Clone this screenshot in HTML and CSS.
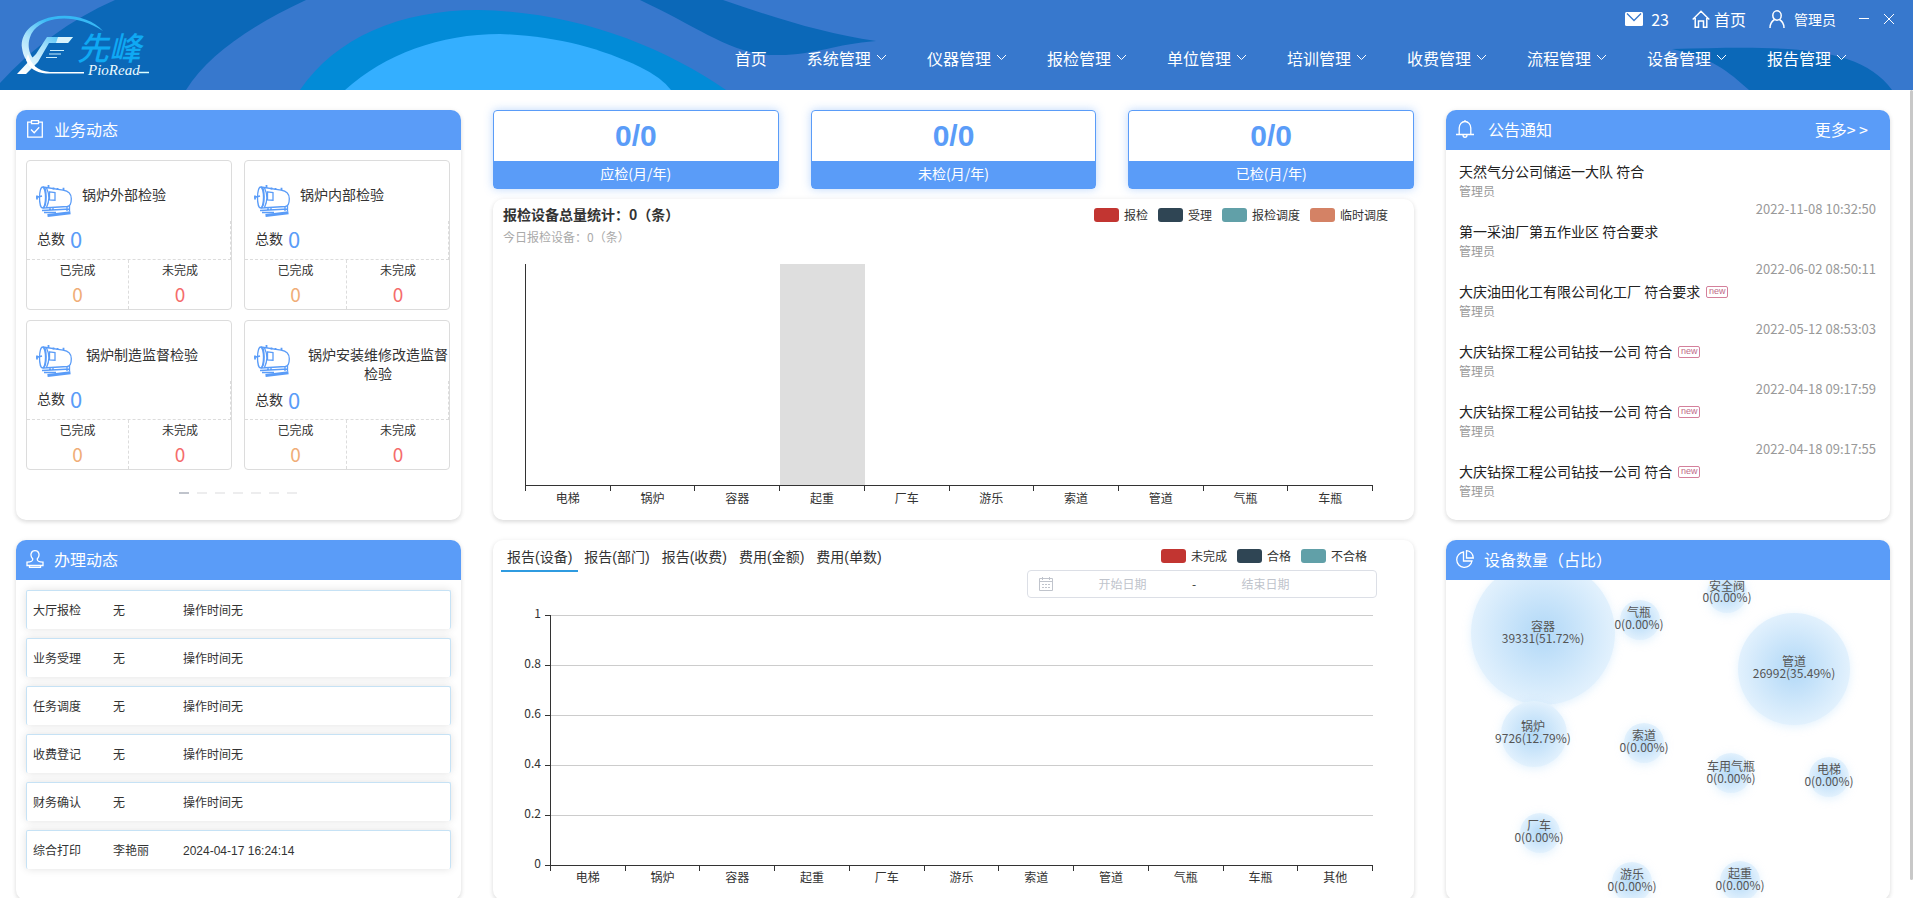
FILE: index.html
```html
<!DOCTYPE html>
<html lang="zh-CN">
<head>
<meta charset="utf-8">
<title>先峰</title>
<link rel="stylesheet" href="styles.css">
</head>
<body>
<svg class="defs" aria-hidden="true">
  <symbol id="boiler" viewBox="0 0 36 32">
    <g fill="none" stroke="#5a9cf8" stroke-width="1.3">
      <ellipse cx="6.500" cy="12.500" rx="3" ry="10.500"/>
      <path d="M7 2c4 0 4.500 19 0 21M7 2l20 3.200c5 .8 8.300 4 8.300 8.500 0 4-1.500 7.500-4 7.800L7 23M10.500 3c3 6 3 13 0 19.500"/>
      <path d="M13.500 6.800l5.500.8v7.600l-5.500-.3z"/>
      <path d="M0 12.500l6-1.500M1 10.500v4M12.500 0v3M17.500 2.500v2M21.500 3v2M27.500 2.800V5" stroke-width="1.800"/>
      <path d="M14 22.500v3.500M17 22v4M33.500 21v5.500M31 21v5M6 25.500l28-1.500M8 27.500h12"/>
      <path d="M11.500 30.500l23-2.800" stroke-width="3"/>
    </g>
  </symbol>
  <symbol id="down" viewBox="0 0 11 8"><path d="M1 1l4.500 4.500L10 1" fill="none" stroke="currentColor" stroke-width="1"/></symbol>
</svg>

<header class="header">
  <svg class="header-bg" viewBox="0 0 1913 90" preserveAspectRatio="none" aria-hidden="true">
    <path fill="#0b68b8" d="M115 0H306C250 26 208 55 186 90H0V83C32 48 70 20 115 0z"/>
    <path fill="#0b68b8" d="M640 0H723C775 18 825 34 876 41C835 44 815 55 779 55C735 57 700 28 640 0z"/>
    <path fill="#028bd7" d="M300 90C335 38 400 10 478 10C575 12 660 45 726 90z"/>
    <path fill="#34afff" d="M345 90C385 54 440 34 500 34C555 36 600 48 640 67Q661 77 671 90z"/>
    <path fill="#0b68b8" d="M1672 49C1780 46 1860 44 1892 90H1749C1728 71 1712 58 1672 49z"/>
  </svg>
  <svg class="logo" width="160" height="90" viewBox="0 0 160 90" role="img" aria-label="先峰 PioRead">
    <defs>
      <linearGradient id="lg" x1="0" y1="75" x2="40" y2="15" gradientUnits="userSpaceOnUse">
        <stop offset=".2" stop-color="#fff"/><stop offset=".65" stop-color="#a9e2fb"/><stop offset="1" stop-color="#36b8f5"/>
      </linearGradient>
    </defs>
    <path fill="url(#lg)" d="M103 31C92 18 70 13 52 17C32 21 20 34 22 48C23 56 26 61 31 64L34 59C28 53 26 40 34 30C46 16 76 13 103 31z"/>
    <path fill="url(#lg)" d="M17 74H26L38 62L49 43H68L73 37H47L36 54L30 60z"/>
    <path fill="#fff" d="M28 54C31 64 37 71 50 72H84V73.500H46C36 73 29 68 26 60z"/>
    <path stroke="#c9eefc" stroke-width="1.200" d="M50 50.500H64M49 54H61M46 57.500H57"/>
    <path fill="#d9f3fc" d="M58 37H73L68 43H56z"/>
    <text class="logo-name" x="77" y="60">先峰</text>
    <text class="logo-sub" x="88" y="75">PioRead</text>
    <path stroke="#dff" stroke-width="1.500" d="M139 72.500H149"/>
  </svg>
  <div class="header-main">
    <div class="toolbar">
      <a class="tool" href="#">
        <svg width="18" height="14" viewBox="0 0 18 14"><rect width="18" height="14" rx="1.500" fill="#fff"/><path d="M2 1.500l7 7 7-7" fill="none" stroke="#3778cd" stroke-width="1.300"/></svg>
        <span class="tool-count">23</span>
      </a>
      <a class="tool tool-home" href="#">
        <svg width="18" height="18" viewBox="0 0 18 18" fill="none" stroke="#fff" stroke-width="1.500"><path d="M.7 9.500L9 1.300l8.300 8.200M3.200 8v9.200h3.300V11h5v6.200h3.300V8"/></svg>
        <span>首页</span>
      </a>
      <a class="tool tool-user" href="#">
        <svg width="16" height="18" viewBox="0 0 16 18" fill="none" stroke="#fff" stroke-width="1.500"><ellipse cx="8" cy="5.500" rx="4.200" ry="4.700"/><path d="M1 18c0-4.500 2-7 4.500-8.500M15 18c0-4.500-2-7-4.500-8.500"/></svg>
        <span>管理员</span>
      </a>
      <div class="window-controls">
        <button class="win-btn" type="button" aria-label="最小化"><svg width="10" height="10" viewBox="0 0 10 10"><path d="M0 4.500h10" stroke="#fff"/></svg></button>
        <button class="win-btn" type="button" aria-label="关闭"><svg width="10" height="10" viewBox="0 0 10 10"><path d="M0 0l10 10M10 0L0 10" stroke="#fff"/></svg></button>
      </div>
    </div>
    <nav class="nav">
      <a href="#">首页</a>
      <a href="#">系统管理<svg class="arrow"><use href="#down"/></svg></a>
      <a href="#">仪器管理<svg class="arrow"><use href="#down"/></svg></a>
      <a href="#">报检管理<svg class="arrow"><use href="#down"/></svg></a>
      <a href="#">单位管理<svg class="arrow"><use href="#down"/></svg></a>
      <a href="#">培训管理<svg class="arrow"><use href="#down"/></svg></a>
      <a href="#">收费管理<svg class="arrow"><use href="#down"/></svg></a>
      <a href="#">流程管理<svg class="arrow"><use href="#down"/></svg></a>
      <a href="#">设备管理<svg class="arrow"><use href="#down"/></svg></a>
      <a href="#">报告管理<svg class="arrow"><use href="#down"/></svg></a>
    </nav>
  </div>
</header>

<main class="board">
  <section class="card area-business">
    <div class="card-head">
      <svg class="head-icon" width="18" height="18" viewBox="0 0 18 18" fill="none" stroke="#fff" stroke-width="1.300"><path d="M5 2.200H1.700v15h14.600v-15H13M5.500.7h7v3h-7zM5 9.500l3.200 3.200 5-5.500"/></svg>
      <h2>业务动态</h2>
    </div>
    <div class="kinds">
      <article class="kind">
        <div class="kind-top"><svg class="boiler"><use href="#boiler"/></svg><h3>锅炉外部检验</h3></div>
        <div class="kind-total">总数<b>0</b></div>
        <div class="kind-split"><div>已完成<b class="done">0</b></div><div>未完成<b class="todo">0</b></div></div>
      </article>
      <article class="kind">
        <div class="kind-top"><svg class="boiler"><use href="#boiler"/></svg><h3>锅炉内部检验</h3></div>
        <div class="kind-total">总数<b>0</b></div>
        <div class="kind-split"><div>已完成<b class="done">0</b></div><div>未完成<b class="todo">0</b></div></div>
      </article>
      <article class="kind">
        <div class="kind-top kind-top-mid"><svg class="boiler"><use href="#boiler"/></svg><h3>锅炉制造监督检验</h3></div>
        <div class="kind-total">总数<b>0</b></div>
        <div class="kind-split"><div>已完成<b class="done">0</b></div><div>未完成<b class="todo">0</b></div></div>
      </article>
      <article class="kind">
        <div class="kind-top kind-top-long"><svg class="boiler"><use href="#boiler"/></svg><h3>锅炉安装维修改造监督检验</h3></div>
        <div class="kind-total">总数<b>0</b></div>
        <div class="kind-split"><div>已完成<b class="done">0</b></div><div>未完成<b class="todo">0</b></div></div>
      </article>
    </div>
    <div class="dots">
      <button type="button" class="dot active" aria-label="1"></button><button type="button" class="dot" aria-label="2"></button><button type="button" class="dot" aria-label="3"></button><button type="button" class="dot" aria-label="4"></button><button type="button" class="dot" aria-label="5"></button><button type="button" class="dot" aria-label="6"></button><button type="button" class="dot" aria-label="7"></button>
    </div>
  </section>

  <div class="area-stats">
    <div class="stats">
      <div class="stat"><strong>0/0</strong><span>应检(月/年)</span></div>
      <div class="stat"><strong>0/0</strong><span>未检(月/年)</span></div>
      <div class="stat"><strong>0/0</strong><span>已检(月/年)</span></div>
    </div>
    <section class="card chart-card">
      <div class="chart-head">
        <div>
          <h3 class="chart-title">报检设备总量统计：0（条）</h3>
          <p class="chart-sub">今日报检设备：0（条）</p>
        </div>
        <ul class="legend">
          <li><i class="swatch red"></i>报检</li>
          <li><i class="swatch navy"></i>受理</li>
          <li><i class="swatch teal"></i>报检调度</li>
          <li><i class="swatch orange"></i>临时调度</li>
        </ul>
      </div>
      <div class="plot plot-volume">
        <div class="cat"><span>电梯</span></div><div class="cat"><span>锅炉</span></div><div class="cat"><span>容器</span></div><div class="cat hover"><span>起重</span></div><div class="cat"><span>厂车</span></div><div class="cat"><span>游乐</span></div><div class="cat"><span>索道</span></div><div class="cat"><span>管道</span></div><div class="cat"><span>气瓶</span></div><div class="cat"><span>车瓶</span></div>
      </div>
    </section>
  </div>

  <section class="card area-notice">
    <div class="card-head">
      <svg class="head-icon" width="18" height="18" viewBox="0 0 18 18" fill="none" stroke="#fff" stroke-width="1.300"><path d="M0 14.500h18M3.200 14.500V8a5.800 6.500 0 0 1 11.600 0v6.500M9 0v1.500M7 15c0 3 4 3 4 0"/></svg>
      <h2 class="notice-heading">公告通知</h2>
      <a class="more" href="#">更多&gt; &gt;</a>
    </div>
    <ul class="notices">
      <li><h3>天然气分公司储运一大队 符合</h3><p>管理员</p><time>2022-11-08 10:32:50</time></li>
      <li><h3>第一采油厂第五作业区 符合要求</h3><p>管理员</p><time>2022-06-02 08:50:11</time></li>
      <li><h3>大庆油田化工有限公司化工厂 符合要求<em>new</em></h3><p>管理员</p><time>2022-05-12 08:53:03</time></li>
      <li><h3>大庆钻探工程公司钻技一公司 符合<em>new</em></h3><p>管理员</p><time>2022-04-18 09:17:59</time></li>
      <li><h3>大庆钻探工程公司钻技一公司 符合<em>new</em></h3><p>管理员</p><time>2022-04-18 09:17:55</time></li>
      <li><h3>大庆钻探工程公司钻技一公司 符合<em>new</em></h3><p>管理员</p></li>
    </ul>
  </section>

  <section class="card area-process">
    <div class="card-head">
      <svg class="head-icon" width="18" height="18" viewBox="0 0 18 18" fill="none" stroke="#fff" stroke-width="1.300"><path d="M6.800 9C3.500 5.500 5 .7 9 .7S14.500 5.500 11.200 9c0 2 .8 3 5.800 3.200v3.300H1v-3.300C6 12 6.800 11 6.800 9zM3.500 15.500v2h11v-2"/></svg>
      <h2>办理动态</h2>
    </div>
    <ul class="steps">
      <li><span>大厅报检</span><span>无</span><span>操作时间无</span></li>
      <li><span>业务受理</span><span>无</span><span>操作时间无</span></li>
      <li><span>任务调度</span><span>无</span><span>操作时间无</span></li>
      <li><span>收费登记</span><span>无</span><span>操作时间无</span></li>
      <li><span>财务确认</span><span>无</span><span>操作时间无</span></li>
      <li><span>综合打印</span><span>李艳丽</span><span>2024-04-17 16:24:14</span></li>
    </ul>
  </section>

  <section class="card area-report">
    <div class="report-head">
      <div class="tabs">
        <button type="button" class="tab active">报告(设备)</button><button type="button" class="tab">报告(部门)</button><button type="button" class="tab">报告(收费)</button><button type="button" class="tab">费用(金额)</button><button type="button" class="tab">费用(单数)</button>
      </div>
      <ul class="legend">
        <li><i class="swatch red"></i>未完成</li>
        <li><i class="swatch navy"></i>合格</li>
        <li><i class="swatch teal"></i>不合格</li>
      </ul>
    </div>
    <div class="range">
      <svg width="14" height="14" viewBox="0 0 14 14" fill="none" stroke="#c0c4cc"><path d="M.5 1.500h13v12H.5zM.5 4.500h13M3.500 0v3M10.500 0v3"/><path d="M3 7.500h8M3 10.500h8" stroke-dasharray="2 1"/></svg>
      <input type="text" placeholder="开始日期" aria-label="开始日期">
      <span>-</span>
      <input type="text" placeholder="结束日期" aria-label="结束日期">
    </div>
    <div class="report-chart">
      <ol class="y-axis"><li>1</li><li>0.8</li><li>0.6</li><li>0.4</li><li>0.2</li><li>0</li></ol>
      <div class="plot plot-report">
        <div class="cat"><span>电梯</span></div><div class="cat"><span>锅炉</span></div><div class="cat"><span>容器</span></div><div class="cat"><span>起重</span></div><div class="cat"><span>厂车</span></div><div class="cat"><span>游乐</span></div><div class="cat"><span>索道</span></div><div class="cat"><span>管道</span></div><div class="cat"><span>气瓶</span></div><div class="cat"><span>车瓶</span></div><div class="cat"><span>其他</span></div>
      </div>
    </div>
  </section>

  <section class="card area-devices">
    <div class="card-head">
      <svg class="head-icon" width="18" height="18" viewBox="0 0 18 18" fill="none" stroke="#fff" stroke-width="1.300"><path d="M7.500 2A7.700 7.700 0 1 0 16 11H7.500zM10.500.7v7.300h6.800A7 7.300 0 0 0 10.500.7z"/></svg>
      <h2>设备数量（占比）</h2>
    </div>
    <svg class="bubbles" role="img" aria-label="设备数量占比">
      <defs>
        <radialGradient id="bub"><stop offset="0" stop-color="#b1d8f7"/><stop offset="1" stop-color="#e2f1fd"/></radialGradient>
      </defs>
      <g class="circles">
        <circle cx="97" cy="53" r="72"/><circle cx="194" cy="40" r="20"/><circle cx="281" cy="13" r="20"/><circle cx="348" cy="89" r="56"/><circle cx="88" cy="154" r="33"/><circle cx="198" cy="163" r="20"/><circle cx="285" cy="193" r="20"/><circle cx="383" cy="197" r="20"/><circle cx="94" cy="253" r="20"/><circle cx="186" cy="302" r="20"/><circle cx="294" cy="301" r="20"/>
      </g>
      <g class="bubble-labels">
        <text x="97" y="51">容器</text><text x="97" y="63">39331(51.72%)</text>
        <text x="193" y="37">气瓶</text><text x="193" y="49">0(0.00%)</text>
        <text x="281" y="11">安全阀</text><text x="281" y="22">0(0.00%)</text>
        <text x="348" y="86">管道</text><text x="348" y="98">26992(35.49%)</text>
        <text x="87" y="151">锅炉</text><text x="87" y="163">9726(12.79%)</text>
        <text x="198" y="160">索道</text><text x="198" y="172">0(0.00%)</text>
        <text x="285" y="191">车用气瓶</text><text x="285" y="203">0(0.00%)</text>
        <text x="383" y="194">电梯</text><text x="383" y="206">0(0.00%)</text>
        <text x="93" y="250">厂车</text><text x="93" y="262">0(0.00%)</text>
        <text x="186" y="299">游乐</text><text x="186" y="311">0(0.00%)</text>
        <text x="294" y="298">起重</text><text x="294" y="310">0(0.00%)</text>
      </g>
    </svg>
  </section>
</main>
<div class="scroll-thumb"></div>
</body>
</html>
```
FILE: styles.css
```css
* { box-sizing: border-box; margin: 0; padding: 0; }
html, body { height: 100%; }
body {
  overflow: hidden;
  background: #fff;
  color: #333;
  font: 12px/18px "Noto Sans CJK SC", "Liberation Sans", sans-serif;
}
h2, h3, b, em, i { font-weight: 400; font-style: normal; }
ul, ol { list-style: none; }
a { color: inherit; text-decoration: none; }
button { border: 0; background: none; font: inherit; color: inherit; }
svg { display: block; flex: none; }
.defs { position: absolute; width: 0; height: 0; }

.header { position: relative; display: flex; height: 90px; background: #3778cd; color: #fff; }
.header-bg { position: absolute; inset: 0; width: 100%; height: 100%; }
.logo { position: relative; }
.logo-name { font-size: 32px; font-weight: 500; font-style: italic; fill: #0fa9f3; }
.logo-sub { font: italic 400 15px "Liberation Serif", serif; fill: #eafaff; }
.header-main { position: relative; flex: 1; }
.toolbar { display: flex; justify-content: flex-end; align-items: center; gap: 23px; height: 38px; padding-right: 19px; font-size: 16px; }
.tool { display: flex; align-items: center; gap: 8px; }
.tool-home { gap: 4px; }
.tool-user { font-size: 14px; gap: 9px; }
.window-controls { display: flex; gap: 15px; height: 20px; align-items: center; }
.win-btn { height: 14px; }
.nav { display: flex; justify-content: flex-end; gap: 40px; padding: 8px 66px 0 0; font-size: 16px; line-height: 24px; }
.nav a { display: flex; align-items: center; gap: 5px; }
.arrow { width: 11px; height: 8px; }

.board {
  display: grid;
  grid-template-columns: 445fr 921fr 444fr;
  grid-template-rows: 410px 360px;
  gap: 20px 32px;
  padding: 20px 23px 20px 16px;
}
.card { background: #fff; border-radius: 10px; box-shadow: 0 2px 4px rgba(0, 0, 0, .12), 0 0 6px rgba(0, 0, 0, .04); overflow: hidden; min-width: 0; }
.card-head { display: flex; align-items: center; height: 40px; padding: 0 22px 2px 10px; background: #5a9cf8; color: #fff; font-size: 16px; line-height: 24px; }
.card-head h2 { font-size: 16px; margin-left: 10px; }
.card-head .notice-heading { margin-left: 14px; }
.more { margin-left: auto; }

.kinds { display: grid; grid-template-columns: 1fr 1fr; gap: 10px 12px; padding: 10px 11px 0 10px; }
.kind { display: flex; flex-direction: column; height: 150px; border: 1px solid #dcdcdc; border-radius: 4px; }
.kind-top { display: flex; gap: 10px; height: 60px; padding: 24px 0 0 9px; }
.kind-top h3 { font-size: 14px; line-height: 19px; text-align: center; }
.kind-top-mid { gap: 14px; }
.kind-top-long { gap: 17px; }
.boiler { width: 36px; height: 32px; }
.kind-total { display: flex; align-items: center; height: 40px; padding: 0 0 3px 10px; font-size: 14px; border-right: 1px dashed #dcdcdc; border-bottom: 1px dashed #dcdcdc; }
.kind-total b { margin-left: 5px; font-size: 22px; color: #5a9cf8; }
.kind-split { display: grid; grid-template-columns: 1fr 1fr; flex: 1; text-align: center; }
.kind-split div { padding-top: 1px; }
.kind-split div:first-child { border-right: 1px dashed #dcdcdc; }
.kind-split b { display: block; font-size: 19px; line-height: 30px; }
.done { color: #f0ad77; }
.todo { color: #f56c6c; }
.dots { display: flex; justify-content: center; gap: 8px; padding: 22px 2px 0 0; }
.dot { width: 10px; height: 2px; background: #ededee; }
.dot.active { background: #c0c4cc; }

.area-stats { display: flex; flex-direction: column; gap: 10px; min-width: 0; }
.stats { display: grid; grid-template-columns: repeat(3, 1fr); gap: 32px; }
.stat { display: flex; flex-direction: column; height: 79px; border: 1px solid #5a9cf8; border-radius: 4px; box-shadow: 0 0 10px rgba(90, 156, 248, .4); text-align: center; }
.stat strong { flex: 1; font: 700 30px/49px "Liberation Sans", sans-serif; color: #5a9cf8; }
.stat span { height: 27px; background: #5a9cf8; color: #fff; font-size: 14px; line-height: 25px; }
.chart-card { flex: 1; display: flex; flex-direction: column; }
.chart-head { display: flex; justify-content: space-between; padding: 4px 26px 0 10px; }
.chart-title { font-size: 14px; font-weight: 700; line-height: 22px; }
.chart-sub { line-height: 24px; color: #aaa; }
.legend { display: flex; gap: 10px; }
.legend li { display: flex; align-items: center; gap: 5px; height: 24px; }
.swatch { width: 25px; height: 14px; border-radius: 3px; }
.red { background: #c23531; }
.navy { background: #2f4554; }
.teal { background: #61a0a8; }
.orange { background: #d48265; }

.plot { position: relative; display: flex; border-left: 1px solid #333; border-bottom: 1px solid #333; }
.cat { position: relative; flex: 1; }
.cat span { position: absolute; top: 100%; left: 0; right: 0; padding: 4px 1px 0 0; text-align: center; }
.cat::after { content: ""; position: absolute; top: 100%; right: 0; width: 1px; height: 6px; background: #333; }
.plot::after { content: ""; position: absolute; top: 100%; left: -1px; width: 1px; height: 6px; background: #333; }
.hover { background: #dedede; }
.plot-volume { flex: 1; margin: 15px 41px 34px 32px; }

.notices { padding: 11px 14px 0 13px; }
.notices li { height: 60px; }
.notices h3 { display: flex; align-items: center; font-size: 14px; line-height: 20px; color: #222; }
.notices em { margin: 2px 0 0 6px; width: 22px; height: 12px; border: 1px solid #d4809b; border-radius: 2px; color: #c06a88; font: 9px/9px "Liberation Sans", sans-serif; text-align: center; }
.notices p { color: #999; line-height: 20px; }
.notices time { display: block; text-align: right; font-size: 13px; line-height: 16px; color: #999; }

.steps { display: grid; gap: 9px; padding: 10px; }
.steps li { display: flex; align-items: center; height: 39px; padding: 2px 0 0 6px; border: 1px solid #c6e2f5; border-bottom: 0; border-radius: 2px; box-shadow: 0 0 8px rgba(0, 0, 0, .12); font-family: "Liberation Sans", "Noto Sans CJK SC", sans-serif; }
.steps span:first-child { width: 80px; }
.steps span:nth-child(2) { width: 70px; }

.area-report { display: flex; flex-direction: column; }
.report-head { display: flex; justify-content: space-between; height: 30px; padding: 0 47px 0 8px; }
.report-head .legend { padding-top: 4px; }
.tabs { display: flex; }
.tab { padding: 4px 6px 0; height: 32px; font: 14px/24px "Liberation Sans", "Noto Sans CJK SC", sans-serif; border-bottom: 2px solid transparent; }
.tab.active { border-color: #2f9be0; }
.range { display: flex; align-items: center; align-self: flex-end; width: 350px; height: 28px; margin-right: 37px; padding: 0 41px 1px 11px; border: 1px solid #dcdfe6; border-radius: 4px; background: #fff; }
.range input { flex: 1; min-width: 0; border: 0; outline: 0; font: inherit; text-align: center; background: none; }
.range input::placeholder { color: #c0c4cc; }
.report-chart { display: flex; padding: 17px 41px 0 30px; }
.y-axis { width: 27px; height: 250px; margin-top: -27px; padding-right: 9px; text-align: right; line-height: 50px; }
.plot-report { flex: 1; height: 251px; background: repeating-linear-gradient(#ccc 0 1px, transparent 1px 50px); }
.plot-report::before { content: ""; position: absolute; top: 0; bottom: -1px; right: 100%; width: 6px; background: repeating-linear-gradient(#333 0 1px, transparent 1px 50px); }
.plot-report .cat span { padding-top: 3px; }

.area-devices { display: flex; flex-direction: column; }
.bubbles { width: 100%; flex: 1; }
.circles circle { fill: url(#bub); filter: drop-shadow(0 2px 5px rgba(160, 210, 250, .3)); }
.bubble-labels { text-anchor: middle; fill: #555; font-size: 12px; }

.scroll-thumb { position: fixed; top: 90px; right: 0; bottom: 18px; width: 3px; border-radius: 2px; background: #c8c8c8; }
```
